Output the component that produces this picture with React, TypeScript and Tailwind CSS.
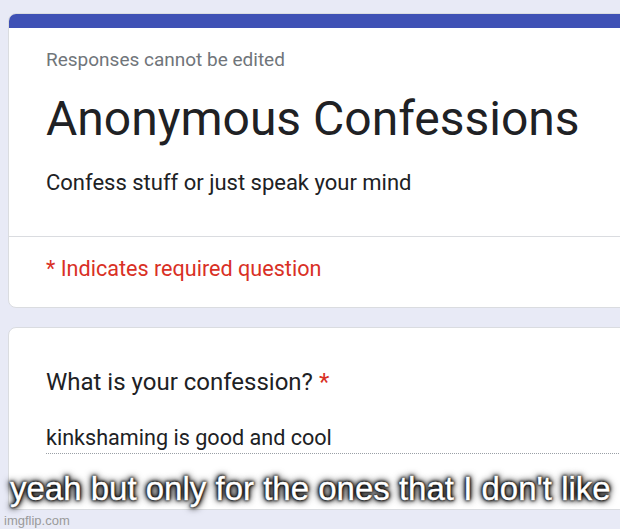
import React from 'react'

const roboto = { fontFamily: 'Roboto, "Noto Sans", sans-serif' }

export default function App() {
  return (
    <div
      className="relative h-[529px] w-[620px] overflow-hidden bg-[#e8eaf6] pl-2 pt-[13px]"
      style={roboto}
    >
      {/* Header card */}
      <div className="w-[660px] overflow-hidden rounded-lg border border-[#dadce0] bg-white">
        <div className="-mx-px -mt-px h-[15px] bg-[#3f51b5]" />
        <div className="pl-[37px] pt-[20px]">
          <div className="text-[19px] leading-[24px] text-[#70757a]">Responses cannot be edited</div>
          <div className="mt-[19px] text-[48px] leading-[56px] text-[#202124]">Anonymous Confessions</div>
          <div className="mt-[22px] text-[22px] leading-[28px] text-[#202124]">
            Confess stuff or just speak your mind
          </div>
        </div>
        <div className="mt-[39px] h-px bg-[#dadce0]" />
        <div className="pb-[26px] pl-[37px] pt-[20px] text-[21.6px] leading-[24px] text-[#d93025]">
          * Indicates required question
        </div>
      </div>

      {/* Question card */}
      <div className="mt-[19px] h-[183px] w-[660px] rounded-lg border border-[#dadce0] bg-white pl-[37px] pt-[40px]">
        <div className="text-[24px] leading-[28px] text-[#202124]">
          What is your confession? <span className="text-[#d93025]">*</span>
        </div>
        <div className="mt-[30px] border-b border-dotted border-[#9aa0a6] pb-[3px] text-[21.6px] leading-[24px] text-[#202124]">
          kinkshaming is good and cool
        </div>
      </div>

      {/* Meme caption overlay */}
      <div
        className="absolute left-[10px] top-[471px] whitespace-nowrap text-[33px] leading-[36px] text-white"
        style={{
          fontFamily: '"Liberation Sans", Arial, sans-serif',
          WebkitTextStroke: '0.4px #fff',
          textShadow: '0 0 2px #000, 0 0 3px #000, 0 0 4px #000, 0 0 6px #000, 0 0 8px #000',
        }}
      >
        yeah but only for the ones that I don't like
      </div>
      <div
        className="absolute bottom-[1px] left-[4px] text-[13px] leading-[14px] text-[#9a9a9a]"
        style={{ fontFamily: '"Liberation Sans", Arial, sans-serif' }}
      >
        imgflip.com
      </div>
    </div>
  )
}
